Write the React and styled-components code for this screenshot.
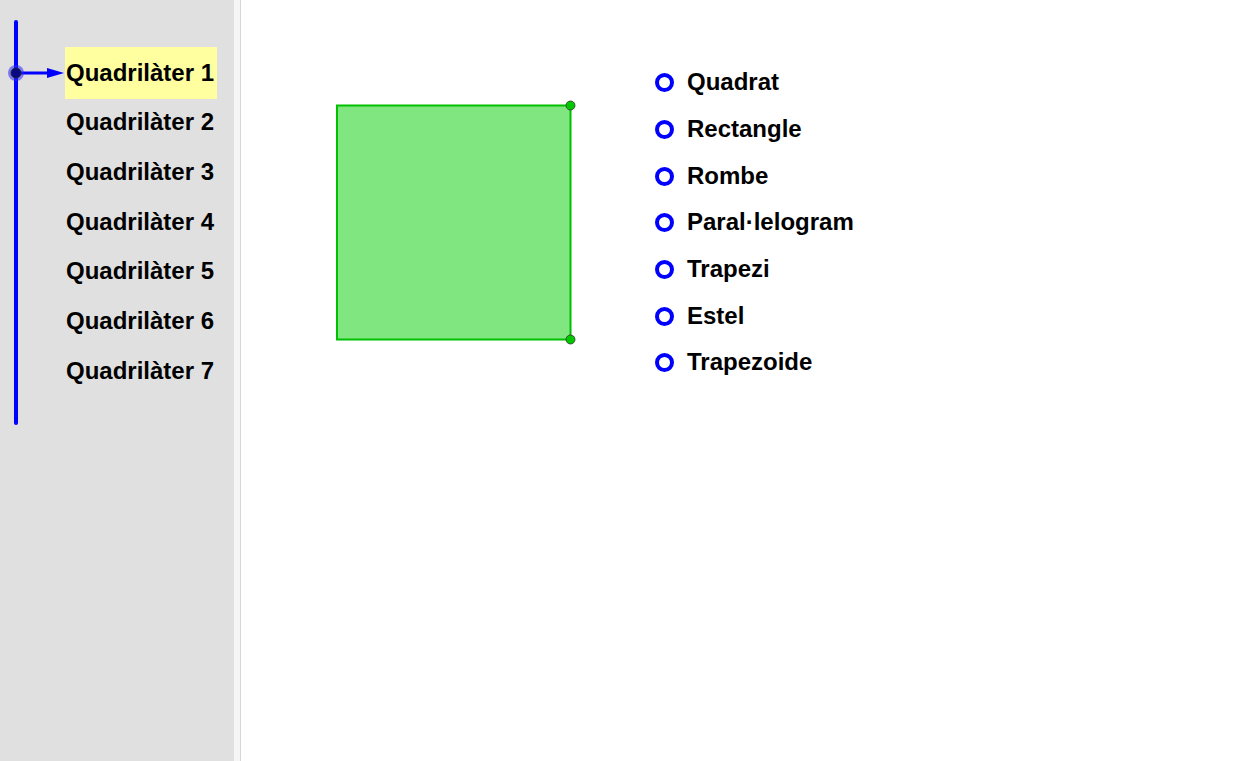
import React, { useState } from "react";
import styled, { createGlobalStyle } from "styled-components";

const Global = createGlobalStyle`
  html, body { margin: 0; padding: 0; height: 100%; overflow: hidden; background: #fff; }
  body { font-family: "Liberation Sans", Arial, sans-serif; }
  #root { height: 100%; }
`;

const Page = styled.div`
  display: flex;
  height: 761px;
  width: 1250px;
`;

const Sidebar = styled.aside`
  width: 234px;
  flex: none;
  background: #e0e0e0;
  display: flex;
  align-items: flex-start;
  padding-top: 19px;
  box-sizing: border-box;
`;

const Splitter = styled.div`
  width: 6px;
  flex: none;
  background: #f5f5f5;
  border-right: 1px solid #d6d6d6;
`;

const SliderArt = styled.svg`
  flex: none;
  display: block;
`;

const LabelList = styled.ul`
  list-style: none;
  margin: 0;
  padding: 28px 0 0 0;
  display: flex;
  flex-direction: column;
`;

const Label = styled.li`
  height: 49.67px;
  width: 152px;
  box-sizing: border-box;
  padding: 2px 0 0 1px;
  display: flex;
  align-items: center;
  font-size: 24px;
  font-weight: bold;
  color: #000;
  white-space: nowrap;
  background: ${(p) => (p.$active ? "#ffffa0" : "transparent")};
  box-shadow: ${(p) => (p.$active ? "0 2px 0 #ffffa0" : "none")};
  cursor: pointer;
`;

const Graphics = styled.main`
  flex: 1;
  background: #fff;
  display: flex;
  align-items: flex-start;
`;

const ShapeArt = styled.svg`
  flex: none;
  display: block;
  margin: 99px 0 0 94px;
`;

const Options = styled.ul`
  list-style: none;
  margin: 59px 0 0 75px;
  padding: 0;
  display: flex;
  flex-direction: column;
`;

const Option = styled.li`
  height: 46.67px;
  display: flex;
  align-items: center;
  gap: 13px;
  font-size: 24px;
  font-weight: bold;
  color: #000;
  white-space: nowrap;
  cursor: pointer;
`;

const Radio = styled.span`
  width: 19px;
  height: 19px;
  box-sizing: border-box;
  border: 4px solid #0000ff;
  border-radius: 50%;
  background: #fff;
  flex: none;
  margin-top: 1px;
`;

const quads = [1, 2, 3, 4, 5, 6, 7];
const options = [
  "Quadrat",
  "Rectangle",
  "Rombe",
  "Paral·lelogram",
  "Trapezi",
  "Estel",
  "Trapezoide",
];

export default function App() {
  const [active] = useState(1);
  return (
    <>
      <Global />
      <Page>
        <Sidebar>
          <SliderArt width="65" height="410" viewBox="0 19 65 410">
            <line x1="16" y1="22" x2="16" y2="423" stroke="#0000ff" strokeWidth="4" strokeLinecap="round" />
            <line x1="18" y1="73" x2="50" y2="73" stroke="#0000ff" strokeWidth="3" />
            <polygon points="47,68 64,73 47,78" fill="#0000ff" />
            <circle cx="16" cy="73" r="8" fill="rgba(40,40,255,0.55)" />
            <circle cx="16" cy="73" r="5" fill="#0a0a80" stroke="#222" strokeWidth="0.8" />
          </SliderArt>
          <LabelList>
            {quads.map((n) => (
              <Label key={n} $active={n === active}>
                Quadrilàter {n}
              </Label>
            ))}
          </LabelList>
        </Sidebar>
        <Splitter />
        <Graphics>
          <ShapeArt width="245" height="250" viewBox="335 99 245 250">
            <rect x="337" y="105.5" width="233.5" height="234" fill="#80e680" stroke="#00c000" strokeWidth="2" />
            <circle cx="570.5" cy="105.5" r="4.5" fill="#00c800" stroke="#333" strokeWidth="0.8" />
            <circle cx="570.5" cy="339.5" r="4.5" fill="#00c800" stroke="#333" strokeWidth="0.8" />
          </ShapeArt>
          <Options>
            {options.map((o) => (
              <Option key={o}>
                <Radio />
                {o}
              </Option>
            ))}
          </Options>
        </Graphics>
      </Page>
    </>
  );
}
